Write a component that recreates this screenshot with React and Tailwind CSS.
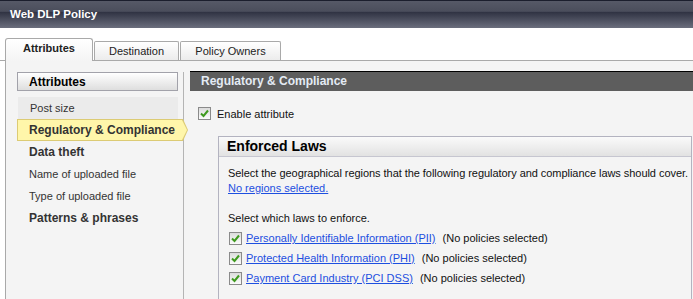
const sideItems = [
  { label: 'Post size', kind: 'plain' },
  { label: 'Regulatory & Compliance', kind: 'active' },
  { label: 'Data theft', kind: 'bold' },
  { label: 'Name of uploaded file', kind: 'normal' },
  { label: 'Type of uploaded file', kind: 'normal' },
  { label: 'Patterns & phrases', kind: 'bold' },
];

const laws = [
  'Personally Identifiable Information (PII)',
  'Protected Health Information (PHI)',
  'Payment Card Industry (PCI DSS)',
];

function CheckBox() {
  return (
    <span className="flex h-[13px] w-[13px] shrink-0 items-center justify-center border border-[#8a8a8a] bg-[linear-gradient(to_bottom,#dcdcdc,#fbfbfb)]">
      <svg width="9" height="9" viewBox="0 0 9 9">
        <path d="M1 4.5 L3.5 7 L8 1.5" fill="none" stroke="#3f9a1f" strokeWidth="2" />
      </svg>
    </span>
  );
}

function SideItem({ item }) {
  if (item.kind === 'active') {
    return (
      <div className="h-[22px] w-[171px] bg-[#dccb74] [clip-path:polygon(0_0,calc(100%-5px)_0,100%_50%,calc(100%-5px)_100%,0_100%)]">
        <div className="ml-px mt-px flex h-[20px] w-[169px] items-center bg-[#fff6aa] pl-[11px] text-[12px] font-bold text-[#333] [clip-path:polygon(0_0,calc(100%-5px)_0,100%_50%,calc(100%-5px)_100%,0_100%)]">
          {item.label}
        </div>
      </div>
    );
  }
  return (
    <div
      className={
        'flex h-[22px] w-[160px] items-center pl-[12px] text-[#333] ' +
        (item.kind === 'plain' ? 'ml-px bg-[#ebebeb] text-[11px]' : '') +
        (item.kind === 'bold' ? 'text-[12px] font-bold' : '') +
        (item.kind === 'normal' ? 'text-[11px]' : '')
      }
    >
      {item.label}
    </div>
  );
}

export default function App() {
  return (
    <div className="h-[299px] w-[693px] overflow-hidden bg-white font-['Liberation_Sans',Arial,sans-serif] text-[11px] text-[#111]">
      <div className="flex h-[28px] items-center bg-[linear-gradient(to_bottom,#1b1e2d_0px,#1b1e2d_1px,#565967_1px,#4b4e5c_11px,#5c5f6d_11px,#2f3242_12px,#6b6e7d_28px)] pl-[10px] pt-[2px] text-[11.5px] font-bold text-white">
        Web DLP Policy
      </div>

      <div className="flex items-end border-b border-[#a9a9a9] pl-[5px] pt-[10px]">
        <div className="-mb-px flex h-[23px] w-[88px] items-center justify-center rounded-t-[3px] border-x border-t border-[#a9a9a9] bg-[linear-gradient(to_bottom,#ffffff,#f4f4f4)] pb-[3px] text-[11px] font-bold text-[#222]">
          Attributes
        </div>
        <div className="ml-px flex h-[19px] w-[85px] items-center justify-center rounded-t-[2px] border-x border-t border-[#a9a9a9] bg-[linear-gradient(to_bottom,#ffffff,#ececec)] text-[11px] text-[#222]">
          Destination
        </div>
        <div className="ml-[1px] flex h-[19px] w-[101px] items-center justify-center rounded-t-[2px] border-x border-t border-[#a9a9a9] bg-[linear-gradient(to_bottom,#ffffff,#ececec)] text-[11px] text-[#222]">
          Policy Owners
        </div>
      </div>

      <div className="ml-[5px] flex h-[240px] border-l border-[#a9a9a9] bg-[#f4f4f4] pt-[10px]">
        <div className="mt-px flex w-[178px] shrink-0 flex-col border-r border-[#b4b4b4] pl-[11px]">
          <div className="flex h-[19px] w-[161px] items-center border border-[#a2a2aa] bg-[linear-gradient(to_bottom,#ffffff,#dedede)] pl-[11px] text-[12px] font-bold text-black">
            Attributes
          </div>
          <div className="mt-[6px] flex flex-col">
            {sideItems.map((item) => (
              <SideItem key={item.label} item={item} />
            ))}
          </div>
        </div>

        <div className="ml-[6px] flex min-w-0 flex-1 flex-col">
          <div className="flex h-[20px] items-center border-t border-black bg-[#5d5d5d] pl-[11px] text-[12px] font-bold text-[#e4ebf4]">
            Regulatory &amp; Compliance
          </div>
          <div className="mt-[15px] flex items-center gap-[6px] pl-[8px]">
            <CheckBox />
            <span>Enable attribute</span>
          </div>
          <div className="ml-[28px] mt-[14px] h-[165px] w-[474px] shrink-0 overflow-hidden border border-[#b3b3c0]">
            <div className="flex h-[20px] items-center border-b border-[#c6c6d0] bg-[linear-gradient(to_bottom,#fafafa,#e2e2e2)] pl-[8px] text-[14px] font-bold text-black">
              Enforced Laws
            </div>
            <div className="pl-[9px] pt-[9px] leading-[15px]">
              <div className="whitespace-nowrap tracking-[-0.05px]">
                Select the geographical regions that the following regulatory and compliance laws should cover.
              </div>
              <div className="text-[#1d4fe0] underline">No regions selected.</div>
              <div className="mt-[15px]">Select which laws to enforce.</div>
              <div className="mt-[5px] flex flex-col gap-[5px] pl-[1px]">
                {laws.map((law) => (
                  <div key={law} className="flex h-[15px] items-center gap-[4px]">
                    <CheckBox />
                    <span className="text-[#1d4fe0] underline">{law}</span>
                    <span className="ml-[3px]">(No policies selected)</span>
                  </div>
                ))}
              </div>
            </div>
          </div>
        </div>
      </div>
    </div>
  );
}
